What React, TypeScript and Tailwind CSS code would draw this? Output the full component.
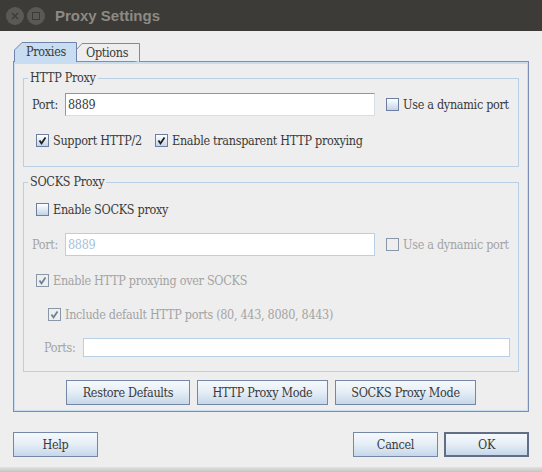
import React from 'react';

const FONT = "font-[family-name:'DejaVu_Serif_Condensed','DejaVu_Serif',serif] font-stretch-condensed tracking-[-0.3px]";

const CheckBox = ({ checked, disabled }: { checked?: boolean; disabled?: boolean }) => (
  <span
    className={
      'relative inline-block w-[13px] h-[13px] shrink-0 border ' +
      (disabled
        ? 'border-[#8a97a8] bg-[#eeeeee]'
        : 'border-[#6d7f9f] bg-gradient-to-b from-[#ffffff] to-[#c3d4e8]')
    }
  >
    {checked && (
      <svg viewBox="0 0 11 11" className="absolute left-0 top-0 w-[11px] h-[11px]">
        <path
          d="M2.5 5.5 L4.5 8.5 L8.5 2.5"
          fill="none"
          stroke={disabled ? '#6f7f93' : '#1e1e1e'}
          strokeWidth="1.8"
        />
      </svg>
    )}
  </span>
);

const Check = ({
  label,
  checked,
  disabled,
  className,
}: {
  label: string;
  checked?: boolean;
  disabled?: boolean;
  className?: string;
}) => (
  <div className={'flex items-center h-[17px] gap-[4px] ' + (className ?? '')}>
    <CheckBox checked={checked} disabled={disabled} />
    <span className={'whitespace-nowrap ' + (disabled ? 'text-[#a4a4a4]' : 'text-[#3a3a3a]')}>{label}</span>
  </div>
);

const Button = ({ label, w, isDefault }: { label: string; w: string; isDefault?: boolean }) => (
  <button
    className={
      'h-[25px] flex items-center justify-center text-[#3a3a3a] bg-gradient-to-b from-[#f6f9fc] via-[#e4edf6] to-[#c6d7ea] ' +
      (isDefault ? 'border-2 border-[#606e88] ' : 'border border-[#7587a6] ') +
      w
    }
  >
    {label}
  </button>
);

export default function App() {
  return (
    <div className={'w-[542px] h-[472px] bg-[#eeeeee] flex flex-col text-[12.5px] leading-[16px] ' + FONT}>
      {/* title bar */}
      <div className="h-[31px] bg-[#3c3b37] flex items-center pl-[6px] shrink-0 tracking-normal">
        <span className="w-[18px] h-[18px] rounded-full bg-[#5a5955] flex items-center justify-center">
          <svg viewBox="0 0 8 8" className="w-[8px] h-[8px]">
            <path d="M1 1 L7 7 M7 1 L1 7" stroke="#3c3b37" strokeWidth="1.4" />
          </svg>
        </span>
        <span className="ml-[3px] w-[18px] h-[18px] rounded-full bg-[#5a5955] flex items-center justify-center">
          <span className="w-[8px] h-[8px] border-[1.5px] border-[#3c3b37]" />
        </span>
        <span className="ml-[10px] font-['Liberation_Sans',sans-serif] font-bold text-[15px] text-[#8d8a84] font-stretch-normal">
          Proxy Settings
        </span>
      </div>

      <div className="pt-[11px] px-[13px] flex flex-col">
        {/* tabs */}
        <div className="flex h-[20px] relative z-10 -mb-px">
          <div className="relative w-[63px] h-[20px] ml-[1px] flex items-center pl-[12px] text-[#3a3a3a]">
            <svg className="absolute inset-0" width="63" height="20" viewBox="0 0 63 20">
              <path d="M0.5 20 L0.5 8 L8 0.5 L62.5 0.5 L62.5 20" fill="#c8ddf2" stroke="#6e84ad" />
            </svg>
            <span className="relative">Proxies</span>
          </div>
          <div className="relative w-[63px] h-[19px] mt-[1px] flex items-center pl-[9px] text-[#3a3a3a]">
            <svg className="absolute inset-0" width="63" height="19" viewBox="0 0 63 19">
              <path d="M0 6 L5 0.5 L62.5 0.5 L62.5 19" fill="#eeeeee" stroke="#7a8aa8" />
            </svg>
            <span className="relative">Options</span>
          </div>
        </div>

        {/* tab panel */}
        <div className="w-[516px] h-[351px] border border-[#7b8fb6] shadow-[inset_0_2px_0_#c8ddf2,inset_1px_0_0_#c8ddf2,inset_-1px_0_0_#c8ddf2,inset_0_-1px_0_#c8ddf2] pl-[9px] pt-[8px] flex flex-col">
          <fieldset className="w-[496px] h-[97px] border border-[#b8cfe5] flex flex-col">
            <legend className="ml-[4px] px-[2px] h-[16px] text-[#3a3a3a]">HTTP Proxy</legend>
            <div className="flex items-center mt-[7px] pl-[8px]">
              <span className="w-[33px] text-[#3a3a3a]">Port:</span>
              <div className="w-[310px] h-[23px] bg-white border border-[#8d96a4] border-b-[#d6dde6] border-r-[#d6dde6] flex items-center pl-[2px] text-[#3a3a3a]">
                8889
              </div>
              <Check label="Use a dynamic port" className="ml-[11px]" />
            </div>
            <div className="flex items-center mt-[16px] pl-[12px]">
              <Check label="Support HTTP/2" checked className="w-[119px]" />
              <Check label="Enable transparent HTTP proxying" checked />
            </div>
          </fieldset>

          <fieldset className="w-[496px] h-[198px] mt-[7px] border border-[#b8cfe5] flex flex-col">
            <legend className="ml-[4px] px-[2px] h-[16px] text-[#3a3a3a]">SOCKS Proxy</legend>
            <Check label="Enable SOCKS proxy" className="mt-[11px] ml-[12px]" />
            <div className="flex items-center mt-[15px] pl-[8px]">
              <span className="w-[33px] text-[#a4a4a4]">Port:</span>
              <div className="w-[310px] h-[23px] bg-white border border-[#b8cfe5] flex items-center pl-[2px] text-[#a8c0d9]">
                8889
              </div>
              <Check label="Use a dynamic port" disabled className="ml-[11px]" />
            </div>
            <Check label="Enable HTTP proxying over SOCKS" checked disabled className="mt-[16px] ml-[12px]" />
            <Check
              label="Include default HTTP ports (80, 443, 8080, 8443)"
              checked
              disabled
              className="mt-[17px] ml-[24px]"
            />
            <div className="flex items-center mt-[15px] pl-[20px]">
              <span className="w-[39px] text-[#a4a4a4]">Ports:</span>
              <div className="w-[427px] h-[19px] bg-white border border-[#b8cfe5]" />
            </div>
          </fieldset>

          <div className="flex justify-center gap-[7px] mt-[8px] pr-[9px]">
            <Button label="Restore Defaults" w="w-[124px]" />
            <Button label="HTTP Proxy Mode" w="w-[131px]" />
            <Button label="SOCKS Proxy Mode" w="w-[141px]" />
          </div>
        </div>

        {/* dialog buttons */}
        <div className="flex mt-[20px]">
          <Button label="Help" w="w-[85px]" />
          <div className="flex-1" />
          <Button label="Cancel" w="w-[85px]" />
          <div className="w-[6px]" />
          <Button label="OK" w="w-[85px]" isDefault />
        </div>
      </div>

      <div className="flex-1" />
      <div className="h-[5px] bg-gradient-to-b from-[#e2e2e2] to-[#c4c4c4]" />
    </div>
  );
}
